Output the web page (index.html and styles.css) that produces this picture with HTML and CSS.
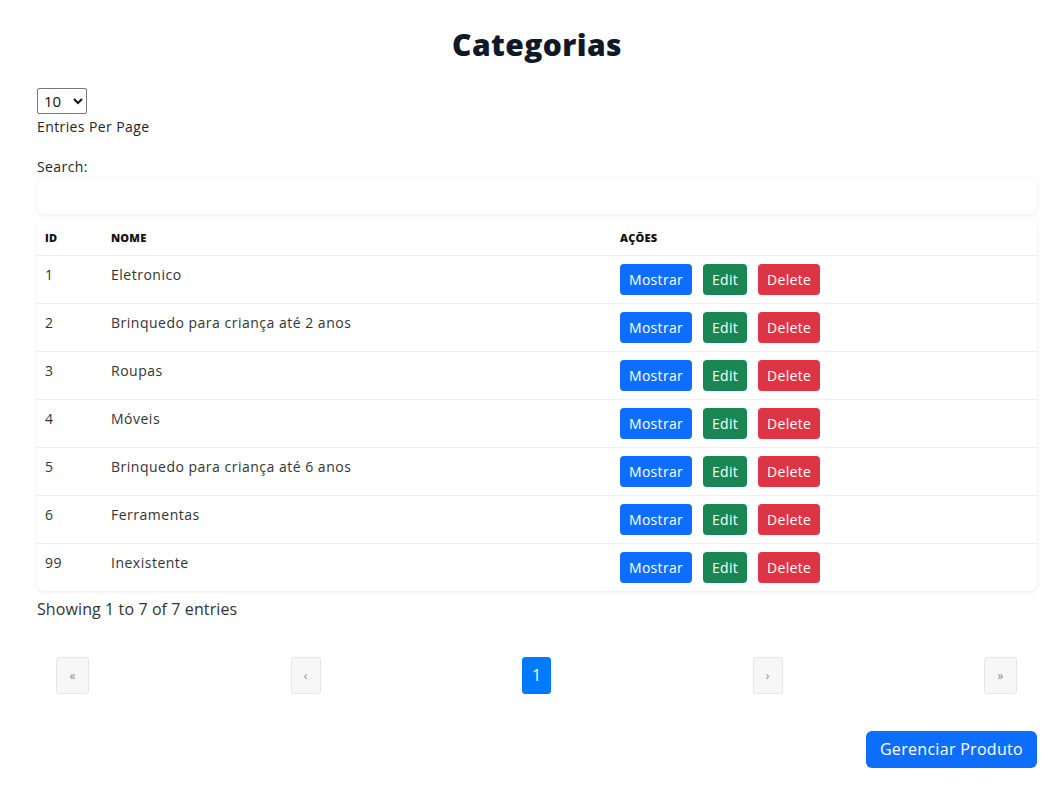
FILE: index.html
```html
<!DOCTYPE html>
<html lang="pt">
<head>
<meta charset="utf-8">
<title>Categorias</title>
<link rel="stylesheet" href="styles.css">
</head>
<body>
<div class="container">
  <h1 class="title">Categorias</h1>
  <div class="per-page">
    <select class="per-select">
      <option>10</option>
      <option>25</option>
      <option>50</option>
    </select>
    <label class="lbl">Entries Per Page</label>
  </div>
  <div class="search">
    <label class="lbl">Search:</label>
    <input class="search-input" type="text">
  </div>
  <div class="table-wrap">
    <table class="table">
      <thead>
        <tr><th class="c-id">ID</th><th class="c-nome">NOME</th><th>AÇÕES</th></tr>
      </thead>
      <tbody>
        <tr><td>1</td><td>Eletronico</td><td><div class="actions"><a class="btn btn-blue">Mostrar</a><a class="btn btn-green">Edit</a><a class="btn btn-red">Delete</a></div></td></tr>
        <tr><td>2</td><td>Brinquedo para criança até 2 anos</td><td><div class="actions"><a class="btn btn-blue">Mostrar</a><a class="btn btn-green">Edit</a><a class="btn btn-red">Delete</a></div></td></tr>
        <tr><td>3</td><td>Roupas</td><td><div class="actions"><a class="btn btn-blue">Mostrar</a><a class="btn btn-green">Edit</a><a class="btn btn-red">Delete</a></div></td></tr>
        <tr><td>4</td><td>Móveis</td><td><div class="actions"><a class="btn btn-blue">Mostrar</a><a class="btn btn-green">Edit</a><a class="btn btn-red">Delete</a></div></td></tr>
        <tr><td>5</td><td>Brinquedo para criança até 6 anos</td><td><div class="actions"><a class="btn btn-blue">Mostrar</a><a class="btn btn-green">Edit</a><a class="btn btn-red">Delete</a></div></td></tr>
        <tr><td>6</td><td>Ferramentas</td><td><div class="actions"><a class="btn btn-blue">Mostrar</a><a class="btn btn-green">Edit</a><a class="btn btn-red">Delete</a></div></td></tr>
        <tr><td>99</td><td>Inexistente</td><td><div class="actions"><a class="btn btn-blue">Mostrar</a><a class="btn btn-green">Edit</a><a class="btn btn-red">Delete</a></div></td></tr>
      </tbody>
    </table>
  </div>
  <p class="showing">Showing 1 to 7 of 7 entries</p>
  <ul class="pagination">
    <li class="page w33">«</li>
    <li class="page w30">‹</li>
    <li class="page active">1</li>
    <li class="page w30">›</li>
    <li class="page w33">»</li>
  </ul>
  <div class="footer">
    <a class="btn-manage">Gerenciar Produto</a>
  </div>
</div>
</body>
</html>
```

FILE: styles.css
```css
* { box-sizing: border-box; }
html, body { margin: 0; padding: 0; background: #fff; }
body {
  font-family: "Open Sans", "Liberation Sans", sans-serif;
  color: #212529;
}
.container {
  width: 1000px;
  margin: 0 auto 0 37px;
  padding-top: 26px;
}
.title {
  margin: 0;
  text-align: center;
  font-size: 30px;
  font-weight: 800;
  color: #111827;
  line-height: 38px;
  letter-spacing: 0.4px;
}
.per-page {
  margin-top: 24px;
  display: flex;
  flex-direction: column;
  align-items: flex-start;
}
.per-select {
  width: 50px;
  height: 26px;
  font-family: "Open Sans", sans-serif;
  font-size: 15px;
  border: 1px solid #767676;
  border-radius: 2px;
  background: #fff;
  color: #111;
  padding: 0 0 0 2px;
}
.lbl {
  display: block;
  font-size: 14px;
  letter-spacing: 0.4px;
  line-height: 26px;
  color: #212529;
}
.search { margin-top: 14px; }
.search-input {
  display: block;
  width: 100%;
  height: 36px;
  border: none;
  border-radius: 8px;
  background: #fff;
  box-shadow: 0 1px 4px rgba(0,0,0,0.09);
  margin-top: -2px;
  outline: none;
}
.table-wrap {
  margin-top: 6px;
  border-radius: 8px;
  background: #fff;
  box-shadow: 0 1px 4px rgba(0,0,0,0.09);
  overflow: hidden;
}
.table {
  width: 100%;
  border-collapse: collapse;
}
.table th {
  text-align: left;
  font-size: 11px;
  font-weight: 800;
  letter-spacing: 0.2px;
  color: #111;
  padding: 10px 8px 9px;
  line-height: 16px;
  border-bottom: 1px solid #eceef0;
}
.c-id { width: 66px; }
.c-nome { width: 509px; }
.table td {
  vertical-align: top;
  font-size: 14px;
  letter-spacing: 0.5px;
  color: #333;
  padding: 8px;
  line-height: 21px;
  border-bottom: 1px solid #eceef0;
}
.table tbody tr:last-child td { border-bottom: none; }
.actions {
  display: flex;
  gap: 11px;
}
.btn {
  display: inline-block;
  height: 31px;
  line-height: 31px;
  padding: 0 9px;
  border-radius: 4px;
  color: #fff;
  font-size: 14px;
  letter-spacing: 0.3px;
  font-weight: 500;
}
.btn-blue { background: #0d6efd; }
.btn-green { background: #198754; }
.btn-red { background: #dc3545; }
.showing {
  margin: 6px 0 0;
  font-size: 16px;
  letter-spacing: 0.1px;
  line-height: 24px;
  color: #333;
}
.pagination {
  list-style: none;
  margin: 36px 0 0;
  padding: 0 20px 0 19px;
  display: flex;
  justify-content: space-between;
}
.page {
  height: 37px;
  line-height: 35px;
  text-align: center;
  background: #f7f7f7;
  border: 1px solid #e6e6e6;
  border-radius: 3px;
  font-size: 12px;
  color: #888;
}
.w33 { width: 33px; }
.w30 { width: 30px; }
.page.active {
  width: 29px;
  background: #007bff;
  border-color: #007bff;
  color: #fff;
  font-size: 16px;
}
.footer {
  display: flex;
  justify-content: flex-end;
  margin-top: 37px;
}
.btn-manage {
  display: inline-block;
  height: 37px;
  line-height: 37px;
  padding: 0 14px;
  border-radius: 6px;
  background: #0d6efd;
  color: #fff;
  font-size: 16px;
  letter-spacing: 0.3px;
  font-weight: 500;
}
```
